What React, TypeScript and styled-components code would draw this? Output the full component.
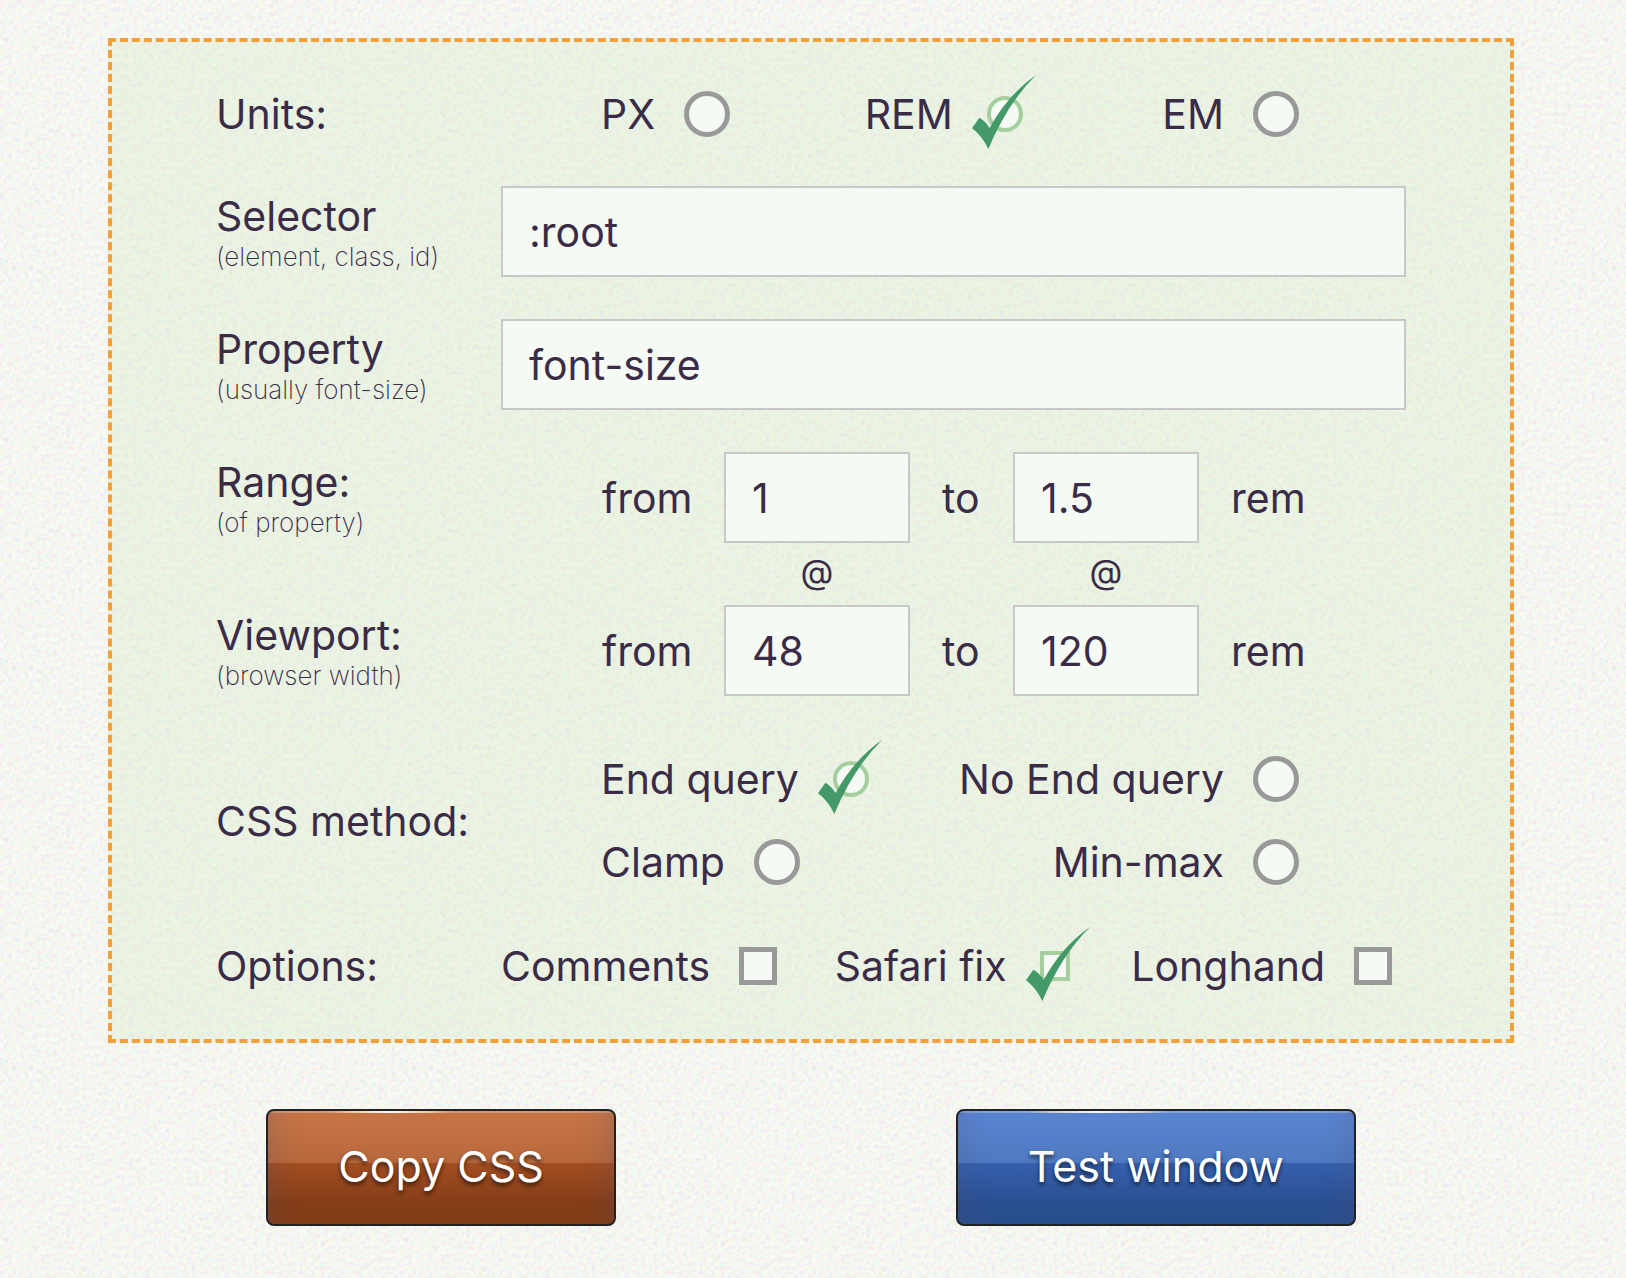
import React, { useId, useState } from "react";
import styled, { createGlobalStyle } from "styled-components";

const ink = "#3a2c47";
const sans = `Inter, "Liberation Sans", Arial, sans-serif`;
const grain = `url("data:image/svg+xml,%3Csvg xmlns='http://www.w3.org/2000/svg' width='400' height='400'%3E%3Cfilter id='n' x='0' y='0' width='100%25' height='100%25' color-interpolation-filters='sRGB'%3E%3CfeTurbulence type='fractalNoise' baseFrequency='.24' numOctaves='2' stitchTiles='stitch'/%3E%3CfeColorMatrix values='1 0 0 0 .4 0 1 0 0 .4 0 0 1 0 .38 0 0 0 0 .17'/%3E%3C/filter%3E%3Crect width='400' height='400' filter='url(%23n)'/%3E%3C/svg%3E")`;

const GlobalStyle = createGlobalStyle`
  *, *::before, *::after { box-sizing: border-box; }
  body {
    margin: 0;
    background: #f8f9f4 ${grain};
    color: ${ink};
    font-family: ${sans};
    font-size: 41px;
    line-height: 46px;
  }
`;

const Page = styled.main`
  padding: 38px 112px 50px 108px;
`;

const Panel = styled.form`
  display: flex;
  flex-direction: column;
  gap: 42px;
  padding: 49px 104px 50px;
  border: 4px dashed #f2a03a;
  background: rgba(215, 235, 200, 0.35);
`;

const Row = styled.div<{ $before?: number }>`
  display: grid;
  grid-template-columns: 285px minmax(0, 1fr);
  align-items: center;
  margin-top: ${(p) => p.$before ?? 0}px;
`;

const Caption = styled.div<{ $stacked?: boolean }>`
  display: flex;
  flex-direction: column;
  padding-top: ${(p) => (p.$stacked ? 6 : 0)}px;
  line-height: 44px;
`;

const Hint = styled.small`
  font-size: 26px;
  font-weight: 200;
  line-height: 38px;
  white-space: nowrap;
`;

const Choices = styled.div<{ $inset?: boolean }>`
  display: flex;
  justify-content: space-between;
  padding: 0 ${(p) => (p.$inset ? 100 : 0)}px;
`;

const ChoiceRows = styled.div`
  display: flex;
  flex-direction: column;
  gap: 37px;
`;

const TextField = styled.input`
  width: 100%;
  min-width: 0;
  height: 91px;
  padding: 0 26px;
  border: 2px solid #c8c8c8;
  border-radius: 0;
  background: #f5faf5;
  color: inherit;
  font: inherit;
  outline: none;
`;

const Span = styled.div`
  display: grid;
  grid-template-columns: 90px 186px 39px 186px auto;
  column-gap: 32px;
  align-items: center;
  padding-left: 101px;
`;

const AtLine = styled(Span)`
  height: 62px;
  margin: -42px 0 -42px 285px;
  padding-bottom: 4px;
  font-size: 34px;
  text-align: center;
`;

const At = styled.span<{ $column: number }>`
  grid-column: ${(p) => p.$column};
  grid-row: 1;
`;

const ChoiceLabel = styled.label<{ $square?: boolean }>`
  display: flex;
  align-items: center;
  gap: 29px;
  height: 46px;
  padding-right: ${(p) => (p.$square ? 14 : 7)}px;
  white-space: nowrap;
`;

const Mark = styled.span`
  position: relative;
  display: flex;
`;

const MarkInput = styled.input`
  appearance: none;
  width: 46px;
  height: 46px;
  margin: 0;
  border: 5px solid #999;
  border-radius: 50%;
  background: #f5faf5;
  &[type="checkbox"] {
    width: 38px;
    height: 38px;
    border-radius: 0;
  }
  &:checked {
    width: 36px;
    height: 36px;
    margin: 5px;
    border: 4px solid #a5cf9f;
  }
  &[type="checkbox"]:checked {
    width: 30px;
    height: 30px;
    margin: 4px;
  }
`;

const Tick = styled.svg`
  position: absolute;
  left: -10px;
  top: calc(50% - 39px);
  width: 64px;
  height: 74px;
  pointer-events: none;
`;

const Actions = styled.div`
  display: flex;
  justify-content: center;
  gap: 340px;
  margin-top: 66px;
`;

const tones = {
  copper: "linear-gradient(#c87648, #b7683c 46%, #a34e22 46%, #843d17 82%, #843d17)",
  blue: "linear-gradient(#5b86d2, #4f79c0 46%, #3660ae 46%, #2a4f90 82%, #2a4f90)",
};

const ActionButton = styled.button<{ $tone: keyof typeof tones }>`
  height: 117px;
  padding: 0 70px 4px;
  border: 2px solid #222;
  border-radius: 8px;
  background:
    linear-gradient(90deg, transparent 17%, rgba(255, 240, 190, 0.6) 24%, #fff 35%, rgba(255, 240, 190, 0.6) 47%, transparent 53%) 0 0 / 100% 2px no-repeat,
    linear-gradient(rgba(255, 255, 255, 0.25), rgba(255, 255, 255, 0.25)) 0 0 / 100% 2px no-repeat,
    ${(p) => tones[p.$tone]};
  box-shadow:
    inset 26px 0 26px -20px rgba(80, 80, 110, 0.25),
    inset -26px 0 26px -20px rgba(80, 80, 110, 0.25);
  color: #fff;
  font-family: inherit;
  font-size: 43px;
  line-height: 46px;
  text-shadow: 0 3px 4px rgba(0, 0, 0, 0.6);
  white-space: nowrap;
`;

function Choice(props: {
  label: string;
  type?: "radio" | "checkbox";
  name: string;
  checked: boolean;
  onChange: () => void;
}) {
  const { label, type = "radio", name, checked, onChange } = props;
  return (
    <ChoiceLabel $square={type === "checkbox"}>
      {label}
      <Mark>
        <MarkInput type={type} name={name} value={label} checked={checked} onChange={onChange} />
        {checked && (
          <Tick viewBox="69 45 192 222" aria-hidden="true">
            <path
              fill="#449968"
              d="M69 205 L91 173 Q108 182 122 204 Q175 105 261 45 Q175 130 118 267 Q98 226 69 205Z"
            />
          </Tick>
        )}
      </Mark>
    </ChoiceLabel>
  );
}

function FieldRow(props: { label: string; hint: string; value: string; before?: number }) {
  const id = useId();
  return (
    <Row $before={props.before}>
      <Caption as="label" htmlFor={id} $stacked>
        {props.label}
        <Hint>{props.hint}</Hint>
      </Caption>
      <TextField id={id} defaultValue={props.value} />
    </Row>
  );
}

function SpanRow(props: { label: string; hint: string; from: string; to: string; unit: string }) {
  const id = useId();
  return (
    <Row role="group" aria-labelledby={id}>
      <Caption id={id} $stacked>
        {props.label}
        <Hint>{props.hint}</Hint>
      </Caption>
      <Span>
        <label htmlFor={id + "from"}>from</label>
        <TextField id={id + "from"} defaultValue={props.from} />
        <label htmlFor={id + "to"}>to</label>
        <TextField id={id + "to"} defaultValue={props.to} />
        <span>{props.unit}</span>
      </Span>
    </Row>
  );
}

export default function App() {
  const [unit, setUnit] = useState("REM");
  const [method, setMethod] = useState("End query");
  const [options, setOptions] = useState<string[]>(["Safari fix"]);

  const toggle = (name: string) =>
    setOptions((now) => (now.includes(name) ? now.filter((o) => o !== name) : [...now, name]));

  const methodChoice = (name: string) => (
    <Choice key={name} name="method" label={name} checked={method === name} onChange={() => setMethod(name)} />
  );

  return (
    <>
      <GlobalStyle />
      <Page>
        <Panel onSubmit={(e) => e.preventDefault()}>
          <Row role="radiogroup" aria-labelledby="units">
            <Caption id="units">Units:</Caption>
            <Choices $inset>
              {["PX", "REM", "EM"].map((name) => (
                <Choice key={name} name="unit" label={name} checked={unit === name} onChange={() => setUnit(name)} />
              ))}
            </Choices>
          </Row>
          <FieldRow before={7} label="Selector" hint="(element, class, id)" value=":root" />
          <FieldRow label="Property" hint="(usually font-size)" value="font-size" />
          <SpanRow label="Range:" hint="(of property)" from="1" to="1.5" unit={unit.toLowerCase()} />
          <AtLine>
            <At $column={2}>@</At>
            <At $column={4}>@</At>
          </AtLine>
          <SpanRow label="Viewport:" hint="(browser width)" from="48" to="120" unit={unit.toLowerCase()} />
          <Row $before={18} role="radiogroup" aria-labelledby="method">
            <Caption id="method">CSS method:</Caption>
            <ChoiceRows>
              <Choices $inset>{["End query", "No End query"].map(methodChoice)}</Choices>
              <Choices $inset>{["Clamp", "Min-max"].map(methodChoice)}</Choices>
            </ChoiceRows>
          </Row>
          <Row $before={16} role="group" aria-labelledby="options">
            <Caption id="options">Options:</Caption>
            <Choices>
              {["Comments", "Safari fix", "Longhand"].map((name) => (
                <Choice
                  key={name}
                  type="checkbox"
                  name="options"
                  label={name}
                  checked={options.includes(name)}
                  onChange={() => toggle(name)}
                />
              ))}
            </Choices>
          </Row>
        </Panel>
        <Actions>
          <ActionButton type="button" $tone="copper">Copy CSS</ActionButton>
          <ActionButton type="button" $tone="blue">Test window</ActionButton>
        </Actions>
      </Page>
    </>
  );
}
